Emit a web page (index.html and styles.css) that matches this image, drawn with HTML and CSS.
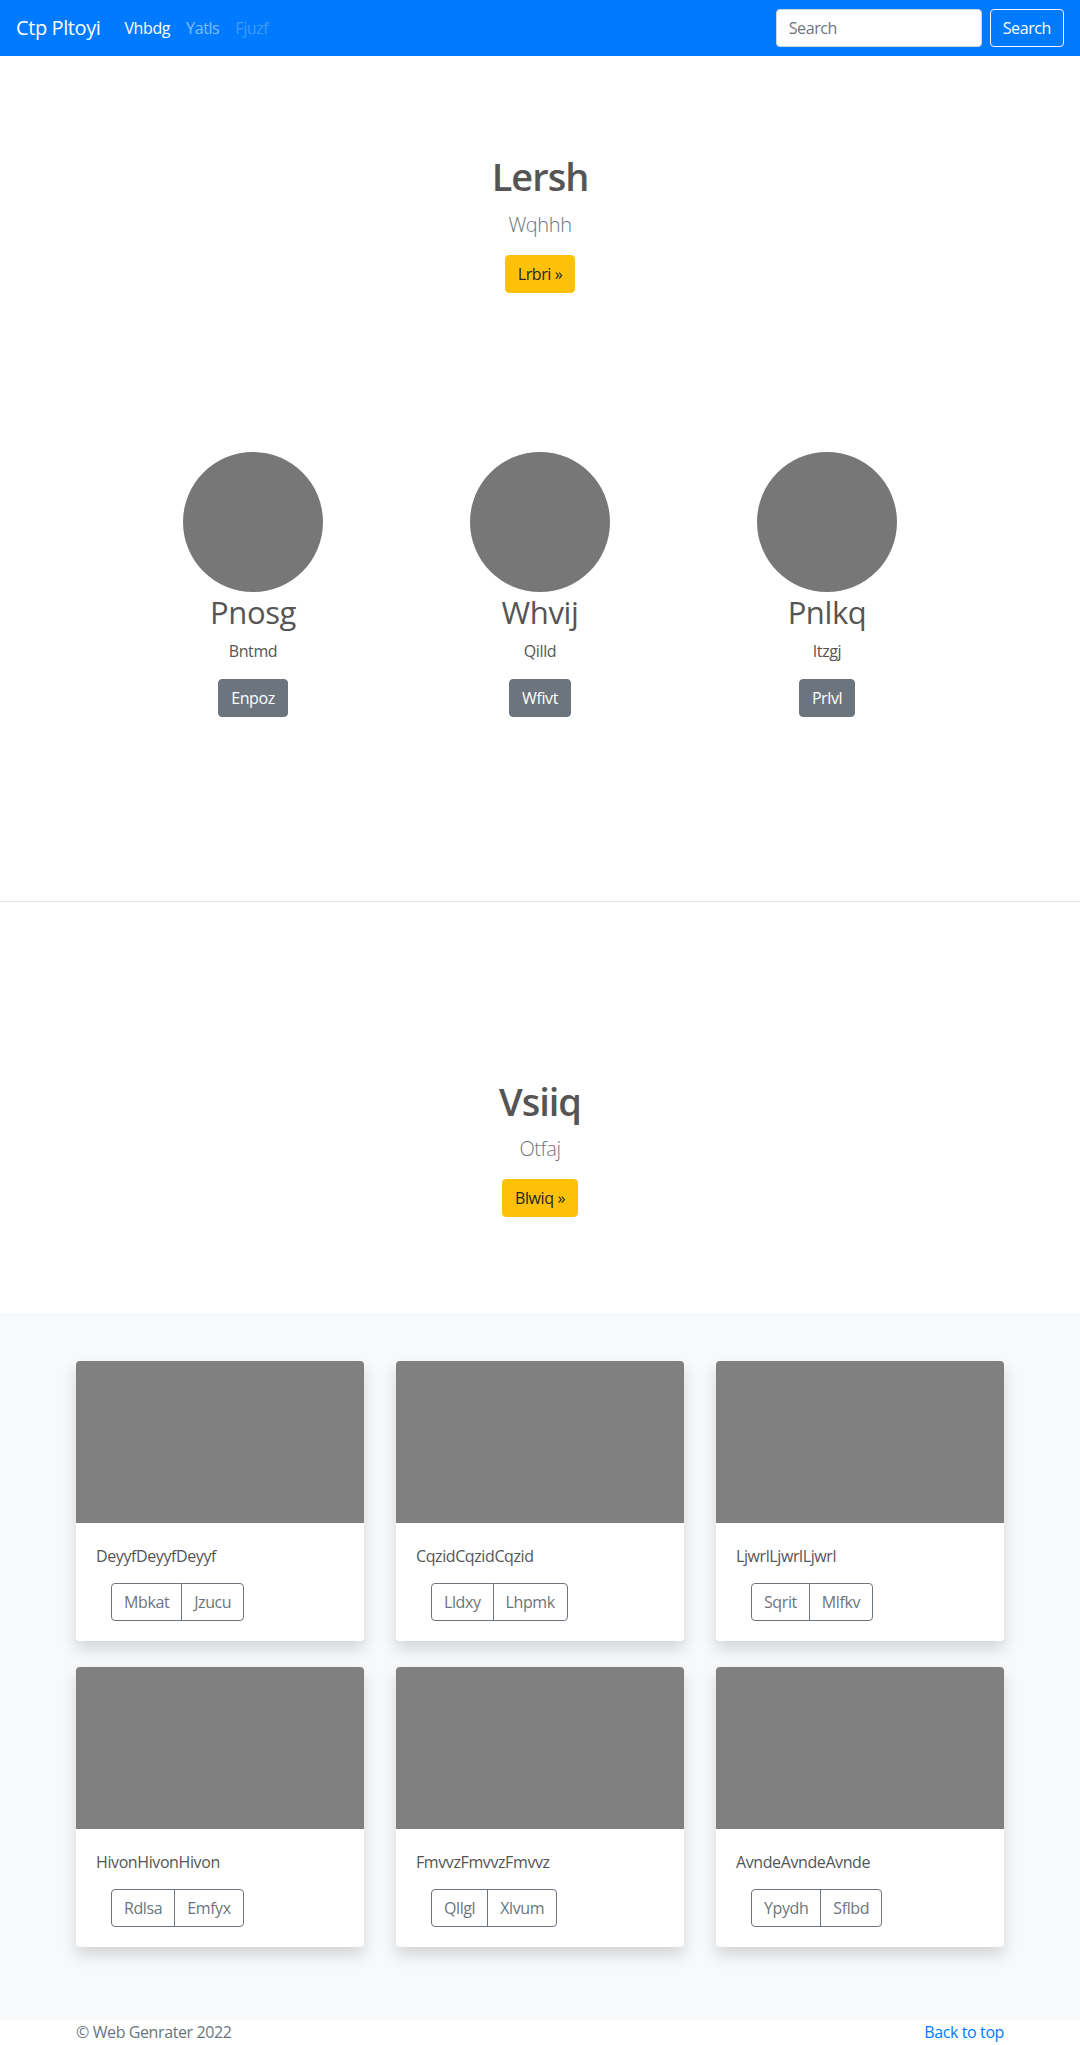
FILE: index.html
```html
<!DOCTYPE html>
<html lang="en">
<head>
    <meta charset="UTF-8">
    <meta name="viewport" content="width=device-width, initial-scale=1.0">
    <title>Ctp Pltoyi</title>
    <link rel="stylesheet" href="styles.css">
</head>
<body>
    <!-- Navbar -->
    <nav class="navbar">
        <a class="brand" href="#">Ctp Pltoyi</a>
        <ul class="nav-links">
            <li><a class="nav-link active" href="#">Vhbdg</a></li>
            <li><a class="nav-link" href="#">Yatls</a></li>
            <li><a class="nav-link disabled" href="#">Fjuzf</a></li>
        </ul>
        <form class="search-form">
            <input class="search-input" type="text" placeholder="Search">
            <button class="btn btn-outline-light" type="button">Search</button>
        </form>
    </nav>

    <main>
        <!-- Hero -->
        <section class="hero hero-top">
            <h1>Lersh</h1>
            <p class="lead">Wqhhh</p>
            <a class="btn btn-warning" href="#">Lrbri &raquo;</a>
        </section>

        <!-- Features -->
        <section class="features">
            <div class="feature">
                <div class="avatar"></div>
                <h2>Pnosg</h2>
                <p>Bntmd</p>
                <a class="btn btn-secondary" href="#">Enpoz</a>
            </div>
            <div class="feature">
                <div class="avatar"></div>
                <h2>Whvij</h2>
                <p>Qilld</p>
                <a class="btn btn-secondary" href="#">Wfivt</a>
            </div>
            <div class="feature">
                <div class="avatar"></div>
                <h2>Pnlkq</h2>
                <p>Itzgj</p>
                <a class="btn btn-secondary" href="#">Prlvl</a>
            </div>
        </section>

        <hr class="divider">

        <!-- Second hero -->
        <section class="hero hero-second">
            <h1>Vsiiq</h1>
            <p class="lead">Otfaj</p>
            <a class="btn btn-warning" href="#">Blwiq &raquo;</a>
        </section>

        <!-- Album -->
        <section class="album">
            <div class="album-grid">
                <div class="card">
                    <div class="card-img"></div>
                    <div class="card-body">
                        <p class="card-text">DeyyfDeyyfDeyyf</p>
                        <div class="btn-group">
                            <button class="btn btn-outline-secondary">Mbkat</button>
                            <button class="btn btn-outline-secondary">Jzucu</button>
                        </div>
                    </div>
                </div>
                <div class="card">
                    <div class="card-img"></div>
                    <div class="card-body">
                        <p class="card-text">CqzidCqzidCqzid</p>
                        <div class="btn-group">
                            <button class="btn btn-outline-secondary">Lldxy</button>
                            <button class="btn btn-outline-secondary">Lhpmk</button>
                        </div>
                    </div>
                </div>
                <div class="card">
                    <div class="card-img"></div>
                    <div class="card-body">
                        <p class="card-text">LjwrlLjwrlLjwrl</p>
                        <div class="btn-group">
                            <button class="btn btn-outline-secondary">Sqrit</button>
                            <button class="btn btn-outline-secondary">Mlfkv</button>
                        </div>
                    </div>
                </div>
                <div class="card">
                    <div class="card-img"></div>
                    <div class="card-body">
                        <p class="card-text">HivonHivonHivon</p>
                        <div class="btn-group">
                            <button class="btn btn-outline-secondary">Rdlsa</button>
                            <button class="btn btn-outline-secondary">Emfyx</button>
                        </div>
                    </div>
                </div>
                <div class="card">
                    <div class="card-img"></div>
                    <div class="card-body">
                        <p class="card-text">FmvvzFmvvzFmvvz</p>
                        <div class="btn-group">
                            <button class="btn btn-outline-secondary">Qllgl</button>
                            <button class="btn btn-outline-secondary">Xlvum</button>
                        </div>
                    </div>
                </div>
                <div class="card">
                    <div class="card-img"></div>
                    <div class="card-body">
                        <p class="card-text">AvndeAvndeAvnde</p>
                        <div class="btn-group">
                            <button class="btn btn-outline-secondary">Ypydh</button>
                            <button class="btn btn-outline-secondary">Sflbd</button>
                        </div>
                    </div>
                </div>
            </div>
        </section>
    </main>

    <!-- Footer -->
    <footer class="footer">
        <p>&copy; Web Genrater 2022</p>
        <a href="#">Back to top</a>
    </footer>
</body>
</html>
```

FILE: styles.css
```css
/* General Styling */
* {
    box-sizing: border-box;
}
body {
    margin: 0;
    font-family: 'Open Sans', 'Noto Sans', sans-serif;
    font-size: 16px;
    line-height: 1.5;
    letter-spacing: -0.025em;
    color: #555;
    background: #fff;
}
a {
    text-decoration: none;
}
p {
    margin: 0;
}

/* Navbar */
.navbar {
    display: flex;
    align-items: center;
    height: 56px;
    padding: 0 16px;
    background: #007bff;
}
.brand {
    margin-right: 16px;
    font-size: 20px;
    line-height: 30px;
    color: #fff;
}
.nav-links {
    display: flex;
    margin: 0;
    padding: 0;
    list-style: none;
}
.nav-link {
    display: block;
    padding: 8px;
    color: rgba(255, 255, 255, 0.5);
}
.nav-link.active { color: #fff; }
.nav-link.disabled { color: rgba(255, 255, 255, 0.25); }
.search-form {
    display: flex;
    gap: 8px;
    margin-left: auto;
}
.search-input {
    width: 206px;
    height: 38px;
    padding: 6px 12px;
    font: inherit;
    letter-spacing: inherit;
    color: #495057;
    border: 1px solid #ced4da;
    border-radius: 4px;
}
.search-input::placeholder { color: #6c757d; }

/* Buttons */
.btn {
    display: inline-block;
    padding: 6px 12px;
    font: inherit;
    line-height: 24px;
    letter-spacing: inherit;
    border: 1px solid transparent;
    border-radius: 4px;
    background: transparent;
    cursor: pointer;
}
.btn-outline-light { color: #fff; border-color: #f8f9fa; }
.btn-warning { color: #212529; background: #ffc107; border-color: #ffc107; }
.btn-secondary { color: #fff; background: #6c757d; border-color: #6c757d; }
.btn-outline-secondary { color: #6c757d; border-color: #6c757d; }

/* Hero */
.hero {
    text-align: center;
}
.hero h1 {
    margin: 0 0 10px;
    font-size: 38px;
    font-weight: 600;
    line-height: 1.2;
    letter-spacing: -1px;
}
.hero .lead {
    margin-bottom: 15px;
    font-size: 20px;
    font-weight: 300;
    color: #6c757d;
}
.hero-top { padding-top: 98px; }
.hero-second { padding: 177px 0 96px; }

/* Features */
.features {
    display: grid;
    grid-template-columns: repeat(3, 1fr);
    width: 861px;
    margin: 159px auto 0;
    text-align: center;
}
.avatar {
    width: 140px;
    height: 140px;
    margin: 0 auto;
    border-radius: 50%;
    background: #777;
}
.feature h2 {
    margin: 2px 0 8px;
    font-size: 31px;
    font-weight: 400;
    line-height: 1.2;
}
.feature p {
    margin-bottom: 16px;
}
.divider {
    margin: 184px 0 0;
    border: 0;
    border-top: 1px solid #e5e5e5;
}

/* Album */
.album {
    padding: 48px 0 73px;
    background: #f8f9fa;
}
.album-grid {
    display: grid;
    grid-template-columns: repeat(3, 288px);
    column-gap: 32px;
    row-gap: 26px;
    width: 928px;
    margin: 0 auto;
}
.card {
    overflow: hidden;
    background: #fff;
    border-radius: 4px;
    box-shadow: 0 8px 16px rgba(0, 0, 0, 0.15);
}
.card-img {
    height: 162px;
    background: #808080;
}
.card-body {
    padding: 21px 20px 20px;
}
.card-text {
    margin-bottom: 15px;
}
.btn-group {
    display: inline-flex;
    margin-left: 15px;
}
.btn-group .btn:first-child {
    border-radius: 4px 0 0 4px;
}
.btn-group .btn:last-child {
    margin-left: -1px;
    border-radius: 0 4px 4px 0;
}

/* Footer */
.footer {
    display: flex;
    justify-content: space-between;
    width: 928px;
    margin: 0 auto;
    line-height: 24px;
    color: #6c757d;
}
.footer a { color: #007bff; }
```
